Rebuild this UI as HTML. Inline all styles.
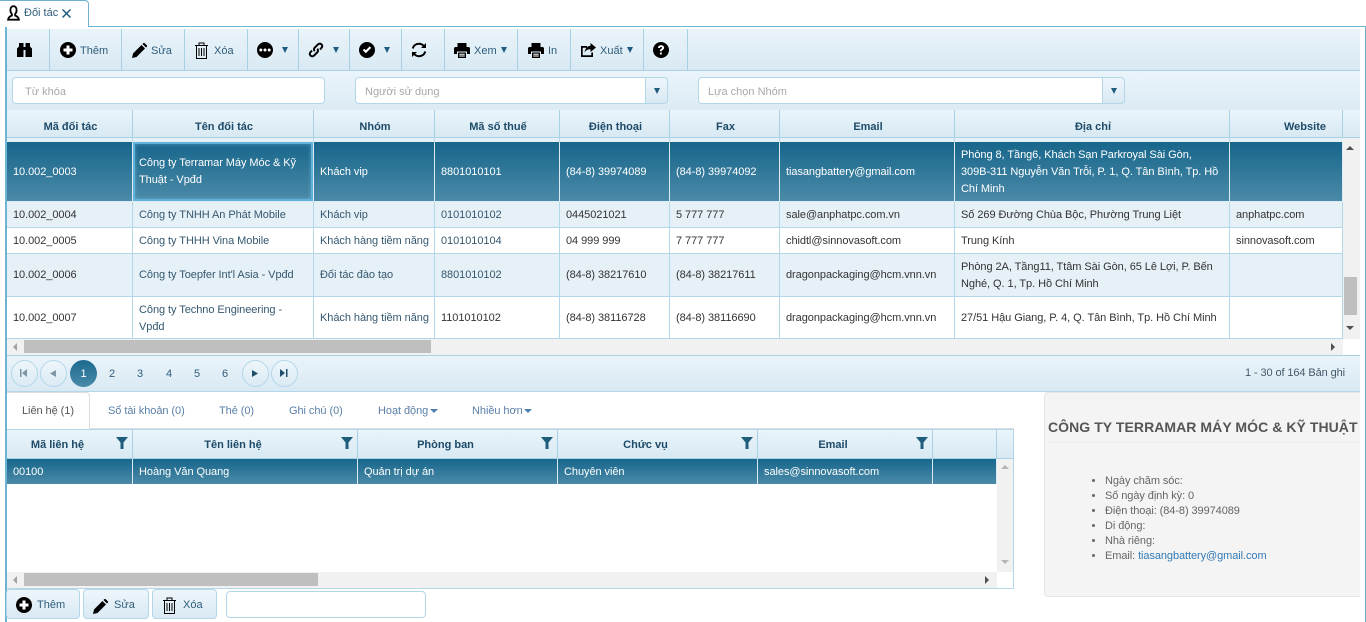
<!DOCTYPE html>
<html lang="vi"><head><meta charset="utf-8"><title>Đối tác</title>
<style>
*{box-sizing:border-box}
html,body{margin:0;padding:0;width:1366px;height:622px;overflow:hidden;background:#fff;font:11px "Liberation Sans",Arial,sans-serif;color:#333}
.a{position:absolute}
#tab{left:0;top:0;width:89px;height:27px;background:#fff;border:1px solid #6db3d3;border-bottom:0;border-left:0;border-radius:0 4px 0 0;z-index:3}
.line{background:#6db3d3}
#tb{left:7px;top:29px;width:1353px;height:42px;background:linear-gradient(#eaf4fa,#d8e9f3);border-bottom:1px solid #a9d1e5}
.sep{position:absolute;top:29px;width:1px;height:41px;background:#a9d1e5}
.tx{position:absolute;top:44px;color:#2f5d7c;line-height:14px;white-space:nowrap}
#sb{left:7px;top:71px;width:1353px;height:39px;background:linear-gradient(#eaf4fa,#dcebf4)}
.inp{position:absolute;top:77px;height:27px;background:#fff;border:1px solid #b3d7e9;border-radius:4px;color:#a8a8a8;line-height:27px;padding:1px 0 0 12px}
.dd{position:absolute;top:77px;width:23px;height:27px;background:linear-gradient(#eef6fb,#d9e9f3);border:1px solid #b3d7e9;border-radius:0 4px 4px 0}
.dd:after,.car{content:"";position:absolute;width:0;height:0;border-left:3px solid transparent;border-right:3px solid transparent;border-top:6px solid #1f5d80}
.dd:after{left:8px;top:10px}
.car{top:47px}
table{position:absolute;border-collapse:separate;border-spacing:0;table-layout:fixed}
th{background:linear-gradient(#e9f4fa,#d8e9f3);font-weight:bold;color:#1d4a68;text-align:center;border-right:1px solid #a9d1e5;border-bottom:1px solid #a9d1e5;padding:0;font-size:11px;position:relative}
.hm th{padding:6px 0 0 2px}
.hs th{padding:2px 24px 0 0}
td{padding:2px 6px 0;border-right:1px solid #b3d7e9;border-bottom:1px solid #b3d7e9;line-height:17px;vertical-align:middle;overflow:hidden;white-space:normal;letter-spacing:-.06px}
tr.sel td{background:linear-gradient(#17668b,#4b8aa8);color:#fff;border-right-color:#dbeaf3;border-bottom-color:#dbeaf3}
tr.o td{background:#e6f0f7}
tr.e td{background:#fff}
tr.r4 td{padding-top:0}
tr.r4 td.m{padding-top:2px}
td.l{color:#35586f}
td.n{white-space:nowrap}
tr.sel td.f{padding-top:0;box-shadow:inset 0 0 0 2px #5fb2da,inset 0 0 3px 3px rgba(130,200,235,.35)}
.sbar{position:absolute;background:#f1f1f1}
.thumb{position:absolute;background:#bfbfbf}
.t{position:absolute;width:0;height:0}
#pg{left:7px;top:355px;width:1353px;height:37px;background:linear-gradient(#eaf4fa,#d9e9f3);border-top:1px solid #a9d1e5;border-bottom:1px solid #b3d7e9}
.pb{position:absolute;top:360px;width:27px;height:27px;border:1px solid #b3d7e9;border-radius:50%;background:linear-gradient(#eef6fb,#dbeaf4)}
.pn{position:absolute;top:367px;color:#2f5d7c;line-height:14px}
#cur{left:70px;top:360px;width:27px;height:27px;border-radius:50%;background:linear-gradient(#1b6a90,#4a8aa8);color:#fff;text-align:center;line-height:28px;border:0}
.tabt{position:absolute;top:404px;color:#5a7fa6;line-height:14px;white-space:nowrap;letter-spacing:-.06px}
.btn{position:absolute;top:589px;height:30px;border:1px solid #b3d7e9;border-radius:4px;background:linear-gradient(#eef6fb,#d9e9f3);color:#2f5d7c}
.btn span{position:absolute;top:8px;line-height:14px}
#info{left:1044px;top:392px;width:316px;height:205px;background:#f4f4f4;border:1px solid #e6e6e6;border-right:0;border-radius:4px 0 0 4px;overflow:hidden}
#info h4{position:absolute;left:3px;top:26px;margin:0;font-size:14px;line-height:16px;font-weight:bold;color:#555;white-space:nowrap;letter-spacing:.06px}
#info hr{position:absolute;left:3px;right:0;top:49px;margin:0;border:0;border-top:1px solid #ececec}
#info ul{position:absolute;left:20px;top:81px;margin:0;padding:0 0 0 40px;line-height:15px;color:#666;font-size:11px;letter-spacing:-.08px}
#info a{color:#337ab7;text-decoration:none}
svg{position:absolute;display:block}
</style></head><body>

<!-- tab strip -->
<div class="a line" style="left:88px;top:26px;width:1278px;height:1px"></div>
<div class="a line" style="left:5px;top:27px;width:2px;height:595px"></div>
<div class="a line" style="left:1365px;top:27px;width:1px;height:595px"></div>
<div class="a" id="tab"></div>
<svg style="left:7px;top:5px;z-index:4" width="13" height="16" viewBox="0 0 13 16"><path d="M6.500 1.200C4.500 1.200 3.400 2.800 3.400 5c0 1.700.6 3.200 1.500 4v1.500C3 11.200 1.400 12 1.100 14.700h10.800c-.3-2.700-1.900-3.500-3.800-4.200V9c.9-.8 1.500-2.300 1.500-4 0-2.200-1.100-3.800-3.100-3.800z" fill="none" stroke="#000" stroke-width="1.800"/></svg>
<div class="a" style="left:24px;top:6px;color:#2f5d7c;line-height:14px;z-index:4">Đối tác</div>
<svg style="left:62px;top:9px;z-index:4" width="9" height="9" viewBox="0 0 9 9"><path d="M.5.500l8 8M8.500.500l-8 8" stroke="#1f5d80" stroke-width="1.500"/></svg>

<!-- toolbar -->
<div class="a" id="tb"></div>
<div class="sep" style="left:49px"></div><div class="sep" style="left:121px"></div><div class="sep" style="left:184px"></div><div class="sep" style="left:247px"></div><div class="sep" style="left:298px"></div><div class="sep" style="left:349px"></div><div class="sep" style="left:401px"></div><div class="sep" style="left:444px"></div><div class="sep" style="left:517px"></div><div class="sep" style="left:570px"></div><div class="sep" style="left:643px"></div><div class="sep" style="left:687px"></div>

<!-- binoculars -->
<svg style="left:17px;top:43px" width="15" height="14" viewBox="0 0 15 14"><path d="M2 0h4.500v4h2V0H13v3.500l2 2V14H8.500V7h-2v7H0V5.500l2-2z" fill="#000"/></svg>
<!-- plus circle -->
<svg style="left:60px;top:42px" width="16" height="16" viewBox="0 0 16 16"><circle cx="8" cy="8" r="8"/><path d="M3.500 6.500h3v-3h3v3h3v3h-3v3h-3v-3h-3z" fill="#fff"/></svg>
<div class="tx" style="left:80px">Thêm</div>
<!-- pencil -->
<svg style="left:132px;top:43px" width="15" height="15" viewBox="0 0 15 15"><path d="M0 15l1-4.500L9.500 2l3.500 3.500L4.500 14zM10.500 1l1-1h1l2.500 2.500v1l-1 1z"/></svg>
<div class="tx" style="left:151px">Sửa</div>
<!-- trash -->
<svg style="left:195px;top:42px" width="13" height="17" viewBox="0 0 13 17"><path d="M0 3.500h13M1.500 3.500V16.500h10V3.500M4 3V1h5v2" fill="none" stroke="#000"/><path d="M4 6v8M6.500 6v8M9 6v8" stroke="#000"/></svg>
<div class="tx" style="left:214px">Xóa</div>
<!-- dots -->
<svg style="left:257px;top:42px" width="16" height="16" viewBox="0 0 16 16"><circle cx="8" cy="8" r="8"/><circle cx="3.800" cy="8" r="1.500" fill="#fff"/><circle cx="8" cy="8" r="1.500" fill="#fff"/><circle cx="12.200" cy="8" r="1.500" fill="#fff"/></svg>
<div class="car" style="left:282px"></div>
<!-- link -->
<svg style="left:308px;top:42px" width="16" height="16" viewBox="0 0 16 16" fill="none" stroke="#000" stroke-width="2"><path d="M6.800 9.200c-1.200-1.200-1-2.600 0-3.600l3-3c1.200-1.200 2.700-1.200 3.700-.2s1 2.500-.2 3.700L12 7.500"/><path d="M9.200 6.800c1.200 1.200 1 2.600 0 3.600l-3 3c-1.200 1.200-2.700 1.200-3.700.2s-1-2.500.2-3.700L4 8.500"/></svg>
<div class="car" style="left:333px"></div>
<!-- check -->
<svg style="left:359px;top:42px" width="16" height="16" viewBox="0 0 16 16"><circle cx="8" cy="8" r="8"/><path d="M3.800 8.300l3 3 5.400-5.400-1.500-1.500-3.900 3.900-1.500-1.500z" fill="#fff"/></svg>
<div class="car" style="left:384px"></div>
<!-- refresh -->
<svg style="left:411px;top:42px" width="16" height="16" viewBox="0 0 16 16" fill="none" stroke="#000" stroke-width="2"><path d="M1.800 6.500C2.500 3.500 5 1.800 8 1.800c2 0 3.500.8 4.800 2.200"/><path d="M14.200 9.500c-.7 3-3.200 4.700-6.200 4.700-2 0-3.500-.8-4.800-2.200"/><path d="M15 1v5h-5z" fill="#000" stroke="none"/><path d="M1 15v-5h5z" fill="#000" stroke="none"/></svg>
<!-- print xem -->
<svg style="left:454px;top:43px" width="16" height="15" viewBox="0 0 16 15"><path d="M3.500 0h9v4h-9zM0 5.500C0 4.700.6 4 1.500 4h13c.9 0 1.500.7 1.500 1.500V11h-3V8.500H3V11H0zM4 9.500h8V15H4z"/><path d="M5.300 11.200h5.400M5.300 13h5.400" stroke="#fff"/></svg>
<div class="tx" style="left:474px">Xem</div>
<div class="car" style="left:501px"></div>
<!-- print in -->
<svg style="left:528px;top:43px" width="16" height="15" viewBox="0 0 16 15"><path d="M3.500 0h9v4h-9zM0 5.500C0 4.700.6 4 1.500 4h13c.9 0 1.500.7 1.500 1.500V11h-3V8.500H3V11H0zM4 9.500h8V15H4z"/><path d="M5.300 11.200h5.400M5.300 13h5.400" stroke="#fff"/></svg>
<div class="tx" style="left:548px">In</div>
<!-- share -->
<svg style="left:580px;top:43px" width="16" height="14" viewBox="0 0 16 14"><path d="M1 3h6v1.700H2.700v7.600h8.600V9.500H13V14H1z"/><path d="M10.500 0L16 4.500 10.500 9V6.300C8 6.300 6 7 4.500 9.500 5 6 7 3 10.500 2.800z"/></svg>
<div class="tx" style="left:600px">Xuất</div>
<div class="car" style="left:627px"></div>
<!-- help -->
<svg style="left:653px;top:42px" width="16" height="16" viewBox="0 0 16 16"><circle cx="8" cy="8" r="8"/><path d="M5 6c0-1.800 1.300-2.800 3.100-2.800 1.700 0 3 1 3 2.500 0 1.200-.7 1.800-1.500 2.300-.6.400-.8.600-.8 1.200H6.900c0-1.200.4-1.800 1.200-2.300.6-.4 1-.7 1-1.100 0-.5-.4-.8-1-.8-.7 0-1.100.4-1.200 1zM6.900 10.500h1.900v2H6.900z" fill="#fff"/></svg>

<!-- search -->
<div class="a" id="sb"></div>
<div class="inp" style="left:12px;width:313px">Từ khóa</div>
<div class="inp" style="left:355px;width:291px;border-radius:4px 0 0 4px;padding-left:9px">Người sử dụng</div>
<div class="dd" style="left:645px"></div>
<div class="inp" style="left:698px;width:405px;border-radius:4px 0 0 4px;padding-left:9px">Lựa chọn Nhóm</div>
<div class="dd" style="left:1102px"></div>

<!-- main grid header -->
<table class="hm" style="left:7px;top:110px;width:1353px">
<colgroup><col style="width:126px"><col style="width:181px"><col style="width:121px"><col style="width:125px"><col style="width:110px"><col style="width:110px"><col style="width:175px"><col style="width:275px"><col style="width:113px"><col style="width:17px"></colgroup>
<tr style="height:28px"><th>Mã đối tác</th><th>Tên đối tác</th><th>Nhóm</th><th>Mã số thuế</th><th>Điện thoại</th><th>Fax</th><th>Email</th><th>Địa chỉ</th><th style="padding-left:38px">Website</th><th style="border-right:0"></th></tr>
</table>
<div class="a" style="left:7px;top:138px;width:1336px;height:4px;background:#e6f0f7"></div>
<div class="a" style="left:132px;top:138px;width:1px;height:4px;background:#b3d7e9;box-shadow:181px 0 #b3d7e9,302px 0 #b3d7e9,427px 0 #b3d7e9,537px 0 #b3d7e9,647px 0 #b3d7e9,822px 0 #b3d7e9,1097px 0 #b3d7e9"></div>

<!-- main grid body -->
<table style="left:7px;top:142px;width:1336px">
<colgroup><col style="width:126px"><col style="width:181px"><col style="width:121px"><col style="width:125px"><col style="width:110px"><col style="width:110px"><col style="width:175px"><col style="width:275px"><col style="width:113px"></colgroup>
<tr class="sel" style="height:60px"><td>10.002_0003</td><td class="f">Công ty Terramar Máy Móc &amp; Kỹ Thuật - Vpđd</td><td>Khách vip</td><td>8801010101</td><td>(84-8) 39974089</td><td>(84-8) 39974092</td><td class="n">tiasangbattery@gmail.com</td><td>Phòng 8, Tầng6, Khách Sạn Parkroyal Sài Gòn, 309B-311 Nguyễn Văn Trỗi, P. 1, Q. Tân Bình, Tp. Hồ Chí Minh</td><td></td></tr>
<tr class="o" style="height:26px"><td>10.002_0004</td><td class="l">Công ty TNHH An Phát Mobile</td><td class="l">Khách vip</td><td class="l">0101010102</td><td>0445021021</td><td>5 777 777</td><td class="n">sale@anphatpc.com.vn</td><td>Số 269 Đường Chùa Bộc, Phường Trung Liệt</td><td class="n">anphatpc.com</td></tr>
<tr class="e" style="height:26px"><td>10.002_0005</td><td class="l">Công ty THHH Vina Mobile</td><td class="l n">Khách hàng tiềm năng</td><td class="l">0101010104</td><td>04 999 999</td><td>7 777 777</td><td class="n">chidtl@sinnovasoft.com</td><td>Trung Kính</td><td class="n">sinnovasoft.com</td></tr>
<tr class="o r4" style="height:43px"><td>10.002_0006</td><td class="l">Công ty Toepfer Int'l Asia - Vpđd</td><td class="l">Đối tác đào tạo</td><td class="l">8801010102</td><td>(84-8) 38217610</td><td>(84-8) 38217611</td><td class="n">dragonpackaging@hcm.vnn.vn</td><td class="m">Phòng 2A, Tầng11, Ttâm Sài Gòn, 65 Lê Lợi, P. Bến Nghé, Q. 1, Tp. Hồ Chí Minh</td><td></td></tr>
<tr class="e" style="height:42px"><td>10.002_0007</td><td class="l">Công ty Techno Engineering - Vpđd</td><td class="l n">Khách hàng tiềm năng</td><td>1101010102</td><td>(84-8) 38116728</td><td>(84-8) 38116690</td><td class="n">dragonpackaging@hcm.vnn.vn</td><td class="n">27/51 Hậu Giang, P. 4, Q. Tân Bình, Tp. Hồ Chí Minh</td><td></td></tr>
</table>

<!-- main scrollbars -->
<div class="sbar" style="left:1343px;top:138px;width:17px;height:201px"></div>
<div class="thumb" style="left:1344px;top:277px;width:13px;height:38px"></div>
<div class="t" style="left:1346px;top:146px;border-left:4px solid transparent;border-right:4px solid transparent;border-bottom:4px solid #505050"></div>
<div class="t" style="left:1346px;top:326px;border-left:4px solid transparent;border-right:4px solid transparent;border-top:4px solid #505050"></div>
<div class="sbar" style="left:7px;top:339px;width:1336px;height:16px"></div>
<div class="thumb" style="left:24px;top:340px;width:407px;height:13px"></div>
<div class="t" style="left:13px;top:343px;border-top:4px solid transparent;border-bottom:4px solid transparent;border-right:4px solid #a3a3a3"></div>
<div class="t" style="left:1331px;top:343px;border-top:4px solid transparent;border-bottom:4px solid transparent;border-left:4px solid #505050"></div>

<!-- pager -->
<div class="a" id="pg"></div>
<div class="pb" style="left:11px"></div><div class="pb" style="left:40px"></div><div class="pb" style="left:242px"></div><div class="pb" style="left:271px"></div>
<svg style="left:20px;top:369px" width="8" height="8" viewBox="0 0 8 8"><path d="M0 0h1.500v8H0zM7 0v8L2 4z" fill="#7d95a5"/></svg>
<svg style="left:50px;top:370px" width="6" height="7" viewBox="0 0 6 7"><path d="M6 0v7L0 3.500z" fill="#7d95a5"/></svg>
<svg style="left:252px;top:370px" width="6" height="7" viewBox="0 0 6 7"><path d="M0 0v7l6-3.500z" fill="#1f4f6b"/></svg>
<svg style="left:280px;top:369px" width="8" height="8" viewBox="0 0 8 8"><path d="M0 0v8l5-4zM6 0h1.500v8H6z" fill="#1f4f6b"/></svg>
<div class="a" id="cur">1</div>
<div class="pn" style="left:109px">2</div><div class="pn" style="left:137px">3</div><div class="pn" style="left:166px">4</div><div class="pn" style="left:194px">5</div><div class="pn" style="left:222px">6</div>
<div class="a" style="right:21px;top:366px;line-height:14px;color:#44596a;letter-spacing:-.1px">1 - 30 of 164 Bản ghi</div>

<!-- detail tabs -->
<div class="a" style="left:89px;top:428px;width:925px;height:1px;background:#ddd"></div>
<div class="a" style="left:7px;top:392px;width:83px;height:37px;background:#fff;border:1px solid #ddd;border-bottom:0;border-left:0;border-radius:0 4px 0 0"></div>
<div class="tabt" style="left:22px;color:#555">Liên hệ (1)</div>
<div class="tabt" style="left:108px">Sổ tài khoản (0)</div>
<div class="tabt" style="left:219px">Thẻ (0)</div>
<div class="tabt" style="left:289px">Ghi chú (0)</div>
<div class="tabt" style="left:378px">Hoạt động</div>
<div class="t" style="left:430px;top:409px;border-left:4px solid transparent;border-right:4px solid transparent;border-top:4px solid #4f7fb0"></div>
<div class="tabt" style="left:472px">Nhiều hơn</div>
<div class="t" style="left:524px;top:409px;border-left:4px solid transparent;border-right:4px solid transparent;border-top:4px solid #4f7fb0"></div>

<!-- sub grid -->
<div class="a" style="left:7px;top:429px;width:1007px;height:160px;border:1px solid #b3d7e9;border-left:0"></div>
<table class="hs" style="left:7px;top:430px;width:1006px">
<colgroup><col style="width:126px"><col style="width:225px"><col style="width:200px"><col style="width:200px"><col style="width:175px"><col style="width:64px"><col style="width:16px"></colgroup>
<tr style="height:29px"><th>Mã liên hệ</th><th>Tên liên hệ</th><th>Phòng ban</th><th>Chức vụ</th><th>Email</th><th></th><th style="border-right:0"></th></tr>
</table>
<svg style="left:116px;top:437px" width="12" height="12" viewBox="0 0 12 12"><path d="M0 0h12L7.500 5.500V12h-3V5.500z" fill="#1f5d7c"/></svg>
<svg style="left:341px;top:437px" width="12" height="12" viewBox="0 0 12 12"><path d="M0 0h12L7.500 5.500V12h-3V5.500z" fill="#1f5d7c"/></svg>
<svg style="left:541px;top:437px" width="12" height="12" viewBox="0 0 12 12"><path d="M0 0h12L7.500 5.500V12h-3V5.500z" fill="#1f5d7c"/></svg>
<svg style="left:741px;top:437px" width="12" height="12" viewBox="0 0 12 12"><path d="M0 0h12L7.500 5.500V12h-3V5.500z" fill="#1f5d7c"/></svg>
<svg style="left:916px;top:437px" width="12" height="12" viewBox="0 0 12 12"><path d="M0 0h12L7.500 5.500V12h-3V5.500z" fill="#1f5d7c"/></svg>
<table style="left:7px;top:459px;width:990px">
<colgroup><col style="width:126px"><col style="width:225px"><col style="width:200px"><col style="width:200px"><col style="width:175px"><col style="width:64px"></colgroup>
<tr class="sel" style="height:25px"><td style="border-bottom:0">00100</td><td style="border-bottom:0">Hoàng Văn Quang</td><td style="border-bottom:0">Quản trị dự án</td><td style="border-bottom:0">Chuyên viên</td><td class="n" style="border-bottom:0">sales@sinnovasoft.com</td><td style="border-bottom:0"></td></tr>
</table>
<div class="sbar" style="left:997px;top:459px;width:16px;height:113px"></div>
<div class="t" style="left:1001px;top:465px;border-left:4px solid transparent;border-right:4px solid transparent;border-bottom:4px solid #b5b5b5"></div>
<div class="t" style="left:1001px;top:560px;border-left:4px solid transparent;border-right:4px solid transparent;border-top:4px solid #b5b5b5"></div>
<div class="sbar" style="left:7px;top:572px;width:990px;height:16px"></div>
<div class="thumb" style="left:24px;top:573px;width:294px;height:13px"></div>
<div class="t" style="left:13px;top:576px;border-top:4px solid transparent;border-bottom:4px solid transparent;border-right:4px solid #a3a3a3"></div>
<div class="t" style="left:985px;top:576px;border-top:4px solid transparent;border-bottom:4px solid transparent;border-left:4px solid #505050"></div>

<!-- bottom buttons -->
<div class="btn" style="left:6px;width:74px"><span style="left:30px">Thêm</span></div>
<svg style="left:16px;top:597px" width="16" height="16" viewBox="0 0 16 16"><circle cx="8" cy="8" r="8"/><path d="M3.500 6.500h3v-3h3v3h3v3h-3v3h-3v-3h-3z" fill="#fff"/></svg>
<div class="btn" style="left:83px;width:66px"><span style="left:30px">Sửa</span></div>
<svg style="left:93px;top:599px" width="15" height="15" viewBox="0 0 15 15"><path d="M0 15l1-4.500L9.500 2l3.500 3.500L4.500 14zM10.500 1l1-1h1l2.500 2.500v1l-1 1z"/></svg>
<div class="btn" style="left:152px;width:65px"><span style="left:30px">Xóa</span></div>
<svg style="left:163px;top:597px" width="13" height="17" viewBox="0 0 13 17"><path d="M0 3.500h13M1.500 3.500V16.500h10V3.500M4 3V1h5v2" fill="none" stroke="#000"/><path d="M4 6v8M6.500 6v8M9 6v8" stroke="#000"/></svg>
<div class="a" style="left:226px;top:591px;width:200px;height:27px;background:#fff;border:1px solid #b3d7e9;border-radius:4px"></div>

<!-- info panel -->
<div class="a" id="info">
<h4>CÔNG TY TERRAMAR MÁY MÓC &amp; KỸ THUẬT</h4><hr>
<ul><li>Ngày chăm sóc:</li><li>Số ngày định kỳ: 0</li><li>Điện thoại: (84-8) 39974089</li><li>Di động:</li><li>Nhà riêng:</li><li>Email: <a>tiasangbattery@gmail.com</a></li></ul>
</div>
</body></html>
